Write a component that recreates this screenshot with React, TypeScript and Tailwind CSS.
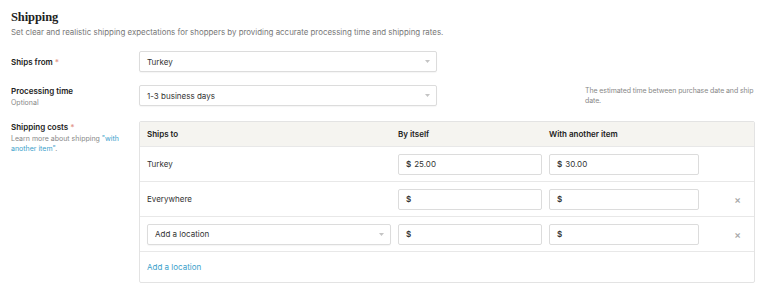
import { ReactNode } from 'react';

const Caret = () => (
  <svg width="5" height="3" viewBox="0 0 5 3" className="shrink-0">
    <path d="M0 0 L5 0 L2.5 3 Z" fill="#c4c4c4" />
  </svg>
);

const Select = ({ value, className = '' }: { value: string; className?: string }) => (
  <div
    className={`flex h-[21px] items-center justify-between rounded-[2px] border border-[#dcdcdc] bg-white pl-[7px] pr-[6px] text-[8px] text-[#333] shadow-[0_1px_1px_rgba(0,0,0,0.04)] ${className}`}
  >
    <span>{value}</span>
    <Caret />
  </div>
);

const Price = ({ value = '' }: { value?: string }) => (
  <div className="flex h-[21px] items-center rounded-[2px] border border-[#dcdcdc] bg-white px-[7px] text-[8px] text-[#333]">
    <span className="font-semibold">$</span>
    {value && <span className="ml-[3px]">{value}</span>}
  </div>
);

const Remove = () => <span className="pr-[6px] text-right text-[10px] font-semibold text-[#a8a8a8]">×</span>;

const Row = ({ children }: { children: ReactNode }) => (
  <div className="grid h-[35px] grid-cols-[244px_144px_150px_1fr] items-center gap-x-[7px] border-b border-[#e8e8e8] px-[7px]">
    {children}
  </div>
);

const Label = ({ title, required, children }: { title: string; required?: boolean; children?: ReactNode }) => (
  <div className="w-[128px] shrink-0 leading-[12px]">
    <div className="text-[8px] font-semibold text-[#222]">
      {title}
      {required && <span className="text-[#e39a8c]"> *</span>}
    </div>
    {children}
  </div>
);

export default function App() {
  return (
    <div className="h-[295px] w-[768px] overflow-hidden bg-white pl-[11px] font-['Inter',sans-serif] text-[#222]">
      <h2 className="pt-[10px] font-['Liberation_Serif',serif] text-[12.5px] font-bold leading-[15px] tracking-[-0.1px] text-[#222]">
        Shipping
      </h2>
      <p className="mt-[2px] text-[7.9px] leading-[10px] text-[#777]">
        Set clear and realistic shipping expectations for shoppers by providing accurate processing time and shipping rates.
      </p>

      <div className="mt-[14px] flex items-center">
        <Label title="Ships from" required />
        <Select value="Turkey" className="w-[298px]" />
      </div>

      <div className="mt-[13px] flex items-start">
        <Label title="Processing time">
          <div className="text-[7px] text-[#888]">Optional</div>
        </Label>
        <Select value="1-3 business days" className="w-[298px]" />
        <p className="ml-[148px] mt-[1px] w-[172px] text-[7px] leading-[10px] tracking-[-0.1px] text-[#888]">
          The estimated time between purchase date and ship date.
        </p>
      </div>

      <div className="mt-[12px] flex items-start">
        <Label title="Shipping costs" required>
          <p className="mt-[1px] w-[112px] text-[7px] leading-[10px] text-[#888]">
            Learn more about shipping <span className="text-[#3c9fcb]">"with another item"</span>.
          </p>
        </Label>
        <div className="w-[616px] overflow-hidden rounded-[2px] border border-[#e3e3e3] text-[8px]">
          <div className="grid h-[25px] grid-cols-[244px_144px_150px_1fr] items-center gap-x-[7px] border-b border-[#e8e8e8] bg-[#f5f4f0] px-[7px] font-semibold text-[#222]">
            <span>Ships to</span>
            <span>By itself</span>
            <span>With another item</span>
            <span />
          </div>
          <Row>
            <span className="text-[#333]">Turkey</span>
            <Price value="25.00" />
            <Price value="30.00" />
            <span />
          </Row>
          <Row>
            <span className="text-[#333]">Everywhere</span>
            <Price />
            <Price />
            <Remove />
          </Row>
          <Row>
            <Select value="Add a location" />
            <Price />
            <Price />
            <Remove />
          </Row>
          <div className="flex h-[30px] items-center px-[7px] text-[#3c9fcb]">Add a location</div>
        </div>
      </div>
    </div>
  );
}
